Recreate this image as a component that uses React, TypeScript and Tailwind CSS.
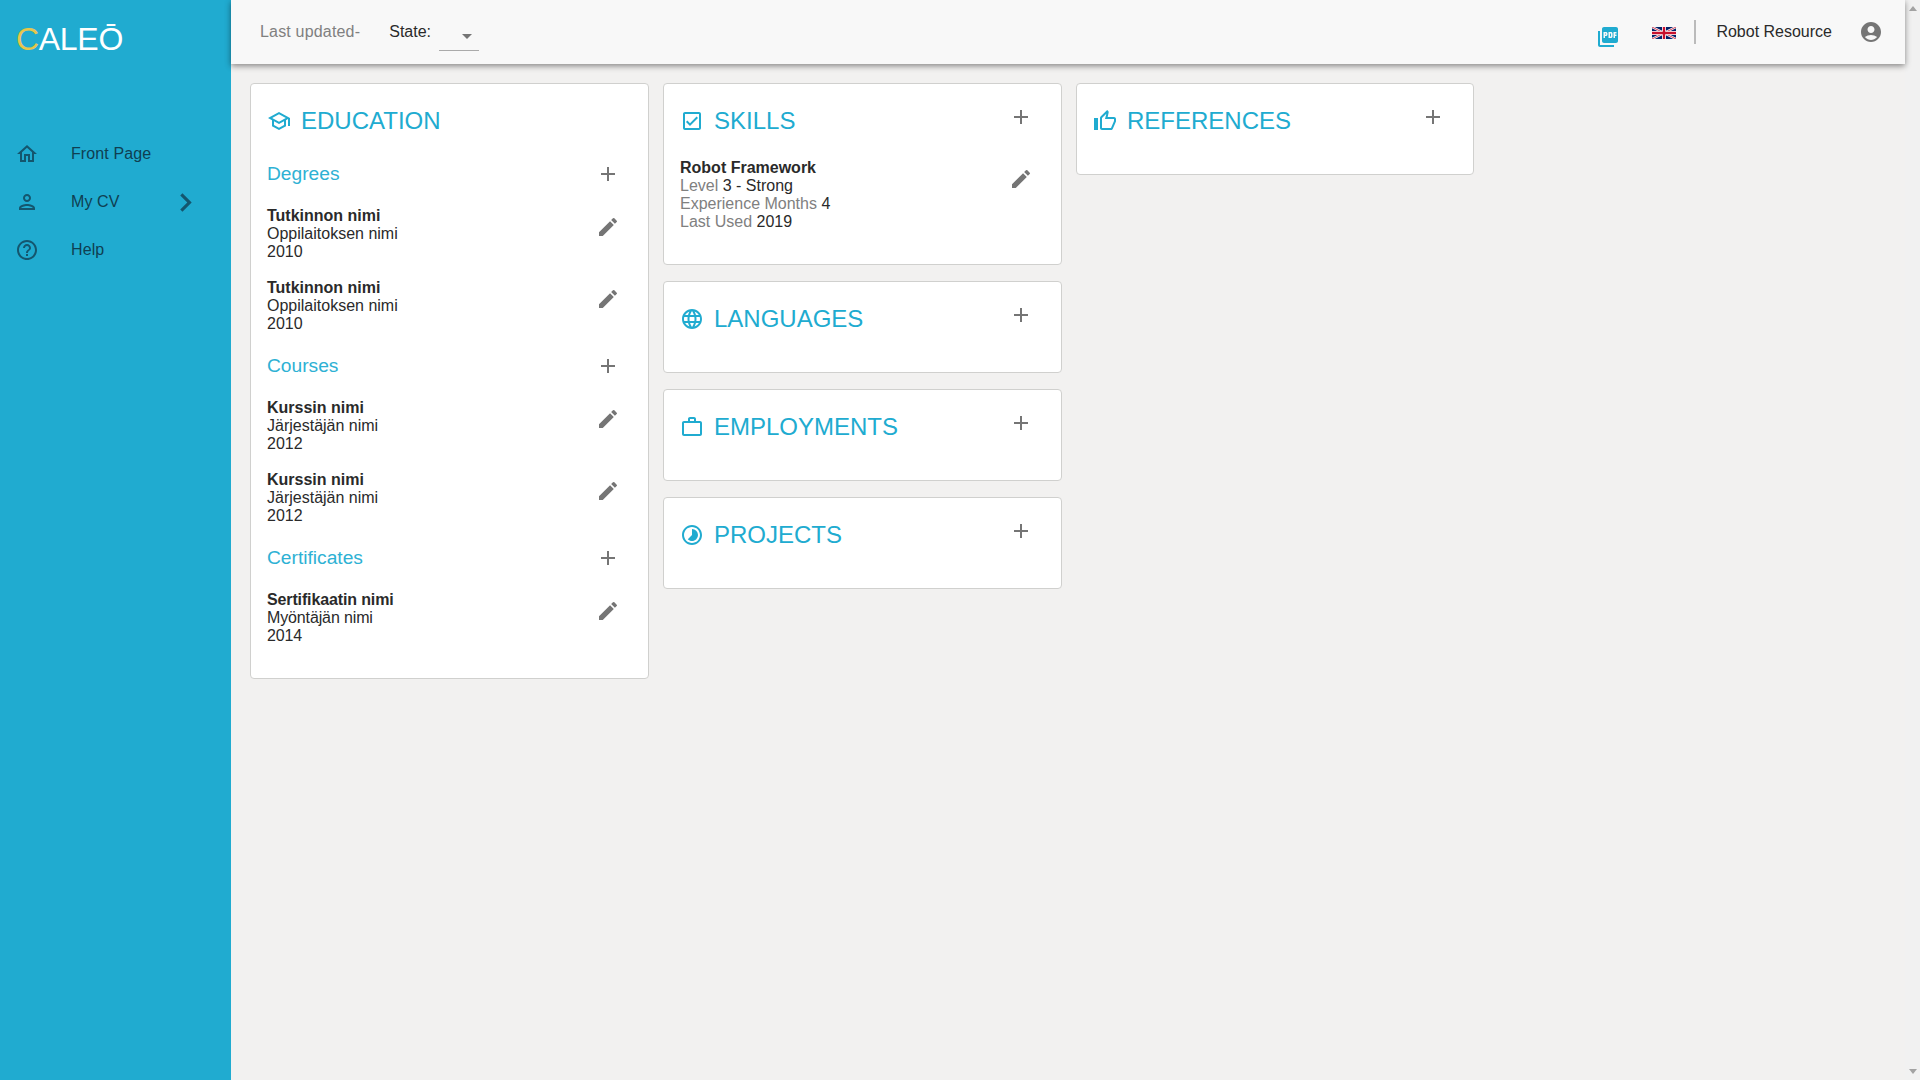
import type { ReactNode } from 'react';
import { MdAccountCircle, MdAdd, MdArrowDropDown, MdChevronRight, MdEdit, MdHelpOutline, MdLanguage, MdOutlineCheckBox, MdOutlineHome, MdOutlinePerson, MdOutlineSchool, MdOutlineThumbUp, MdPictureAsPdf, MdTimelapse, MdWorkOutline } from 'react-icons/md';
import type { IconType } from 'react-icons';

const navItems: { label: string; icon: IconType; arrow?: boolean }[] = [
  { label: 'Front Page', icon: MdOutlineHome },
  { label: 'My CV', icon: MdOutlinePerson, arrow: true },
  { label: 'Help', icon: MdHelpOutline },
];

const sections = [
  {
    title: 'Degrees',
    itemClass: '',
    items: [
      ['Tutkinnon nimi', 'Oppilaitoksen nimi', '2010'],
      ['Tutkinnon nimi', 'Oppilaitoksen nimi', '2010'],
    ],
  },
  {
    title: 'Courses',
    itemClass: '',
    items: [
      ['Kurssin nimi', 'Järjestäjän nimi', '2012'],
      ['Kurssin nimi', 'Järjestäjän nimi', '2012'],
    ],
  },
  {
    title: 'Certificates',
    itemClass: 'tracking-[-0.13px]',
    items: [['Sertifikaatin nimi', 'Myöntäjän nimi', '2014']],
  },
];

function FlagUk() {
  return (
    <svg width="24" height="12" viewBox="0 0 60 30" aria-label="English">
      <rect width="60" height="30" fill="#012169" />
      <path d="M0 0L60 30M60 0L0 30" stroke="#fff" strokeWidth="6" />
      <path d="M0 0L60 30M60 0L0 30" stroke="#c8102e" strokeWidth="2" />
      <path d="M30 0V30M0 15H60" stroke="#fff" strokeWidth="10" />
      <path d="M30 0V30M0 15H60" stroke="#c8102e" strokeWidth="6" />
    </svg>
  );
}

function Sidebar() {
  return (
    <aside className="w-[231px] shrink-0 bg-[#20abd0]">
      <div className="h-[130px] pl-[16px] pt-[19px] text-[32px] leading-[41px] text-white tracking-[-0.3px]">
        <span className="text-[#e6c64c]">C</span>ALEŌ
      </div>
      <nav>
        {navItems.map(({ label, icon: Icon, arrow }) => (
          <div key={label} className="flex h-[48px] items-center pl-[15px] text-[16px] tracking-[0.1px] text-[#0f3f52]">
            <Icon size={24} className="text-[#14566e]" />
            <span className="ml-[32px] w-[96px]">{label}</span>
            {arrow && <MdChevronRight size={37} className="text-[#14566e]" />}
          </div>
        ))}
      </nav>
    </aside>
  );
}

function TopBar() {
  return (
    <header className="relative z-10 flex h-[64px] shrink-0 items-center bg-[#f8f8f8] pl-[29px] shadow-[0_2px_6px_rgba(0,0,0,0.45)]">
      <span className="mb-[1px] text-[16px] tracking-[0.18px] text-[#808080]">Last updated-</span>
      <span className="ml-[29px] text-[16px] text-[#2a2a2a]">State:</span>
      <div className="ml-[8px] mt-[4px] flex h-[33px] w-[40px] items-center justify-end border-b border-[#aaa] text-[#757575]">
        <MdArrowDropDown size={24} className="mt-[4px]" />
      </div>
      <MdPictureAsPdf size={24} className="ml-auto mt-[9px] text-[#20abd0]" />
      <div className="ml-[32px] mt-[1px]">
        <FlagUk />
      </div>
      <div className="ml-[18px] h-[24px] w-[2px] bg-[#bbb]" />
      <span className="ml-[20px] mb-[1px] text-[16px] text-[#2a2a2a]">Robot Resource</span>
      <MdAccountCircle size={24} className="ml-[27px] mr-[22px] mb-[1px] text-[#757575]" />
    </header>
  );
}

function Card({ title, icon: Icon, action = true, className, children }: { title: string; icon: IconType; action?: boolean; className?: string; children?: ReactNode }) {
  return (
    <section className={`rounded-[4px] border border-[#d0d0ce] bg-white pt-[20px] pl-[16px] pr-[28px] ${className ?? 'w-[399px] pb-[36px]'}`}>
      <div className="flex h-[34px] items-center">
        <Icon size={24} className="shrink-0 text-[#20abd0]" />
        <h2 className="ml-[10px] text-[24px] leading-[34px] text-[#20abd0]">{title}</h2>
        {action && <MdAdd size={24} className="ml-auto mb-[8px] text-[#757575]" />}
      </div>
      {children}
    </section>
  );
}

function EduItem({ lines, className }: { lines: string[]; className: string }) {
  return (
    <div className={`flex h-[54px] justify-between text-[16px] leading-[18px] text-[#2a2a2a] ${className}`}>
      <div>
        <div className="font-bold">{lines[0]}</div>
        <div>{lines[1]}</div>
        <div>{lines[2]}</div>
      </div>
      <MdEdit size={24} className="mt-[8px] text-[#757575]" />
    </div>
  );
}

function App() {
  return (
    <div className="flex h-screen overflow-hidden bg-[#f2f1f0] font-['Liberation_Sans',Arial,sans-serif]">
      <Sidebar />
      <div className="flex min-w-0 flex-1 flex-col">
        <TopBar />
        <main className="flex items-start gap-[14px] pl-[19px] pt-[19px]">
          <Card title="EDUCATION" icon={MdOutlineSchool} action={false} className="w-[399px] pb-[33px]">
            <div className="mt-[15px] flex flex-col gap-[12px]">
              {sections.map((section) => (
                <div key={section.title}>
                  <div className="mb-[14px] flex h-[40px] items-center justify-between">
                    <h3 className="mt-[2px] text-[19.2px] text-[#2eb1d4]">{section.title}</h3>
                    <MdAdd size={24} className="mt-[1px] text-[#757575]" />
                  </div>
                  <div className="flex flex-col gap-[18px]">
                    {section.items.map((lines, i) => (
                      <EduItem key={i} lines={lines} className={section.itemClass} />
                    ))}
                  </div>
                </div>
              ))}
            </div>
          </Card>
          <div className="flex flex-col gap-[16px]">
            <Card title="SKILLS" icon={MdOutlineCheckBox} className="w-[399px] pb-[33px]">
              <div className="mt-[21px] flex justify-between text-[16px] leading-[18px] text-[#2a2a2a]">
                <div>
                  <div className="font-bold">Robot Framework</div>
                  <div><span className="text-[#808080]">Level</span> 3 - Strong</div>
                  <div><span className="text-[#808080]">Experience Months</span> 4</div>
                  <div><span className="text-[#808080]">Last Used</span> 2019</div>
                </div>
                <MdEdit size={24} className="mt-[8px] text-[#757575]" />
              </div>
            </Card>
            <Card title="LANGUAGES" icon={MdLanguage} />
            <Card title="EMPLOYMENTS" icon={MdWorkOutline} />
            <Card title="PROJECTS" icon={MdTimelapse} />
          </div>
          <Card title="REFERENCES" icon={MdOutlineThumbUp} className="w-[398px] pb-[36px]" />
        </main>
      </div>
      <div className="flex w-[15px] shrink-0 flex-col items-center justify-between bg-[#f1f1f1] py-[6px]">
        <div className="h-0 w-0 border-x-[4px] border-b-[5px] border-x-transparent border-b-[#a3a3a3]" />
        <div className="h-0 w-0 border-x-[4px] border-t-[5px] border-x-transparent border-t-[#a3a3a3]" />
      </div>
    </div>
  );
}

export default App;
